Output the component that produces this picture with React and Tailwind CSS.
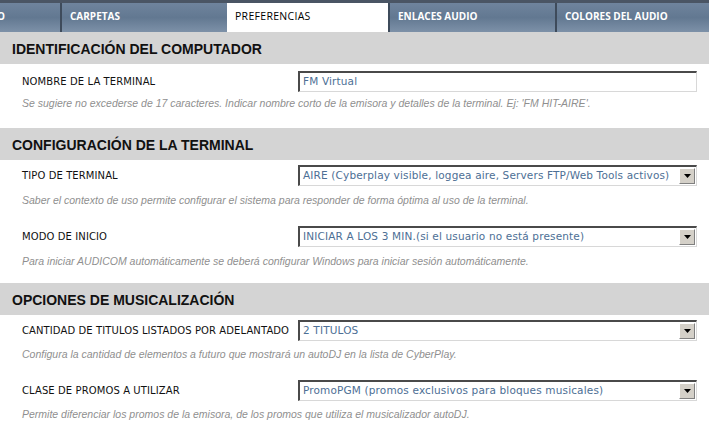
import React from "react";

const tabFont = { fontFamily: '"Open Sans", sans-serif' };
const dv = { fontFamily: '"DejaVu Sans", Verdana, sans-serif' };

function Tab({ label, active, className = "" }) {
  if (active) {
    return (
      <div className={"h-[29px] mt-[3px] pb-[2px] bg-white flex items-center pl-[8px] text-[10.5px] tracking-[0.3px] text-black " + className} style={tabFont}>
        {label}
      </div>
    );
  }
  return (
    <div className={"h-[29px] mt-[3px] pb-[2px] flex items-center pl-[8px] text-[10px] font-bold text-white bg-gradient-to-b from-[#6f849d] via-[#627891] to-[#7d91a8] border-l-2 border-[#3e4b5b] overflow-hidden whitespace-nowrap " + className} style={tabFont}>
      {label}
    </div>
  );
}

function Select({ value }) {
  return (
    <div className="flex-1 h-[21px] flex items-stretch border-t-2 border-l-2 border-[#4a4a4a] border-r border-b border-r-[#d8d8d8] border-b-[#d8d8d8] bg-white">
      <div className="flex-1 flex items-center pl-[3px] text-[10.5px] text-[#4d6f95] tracking-[0.15px] whitespace-nowrap overflow-hidden" style={dv}>
        {value}
      </div>
      <div className="w-[16px] my-[1px] mr-[1px] bg-[#d4d0c8] border border-t-white border-l-white border-r-[#808080] border-b-[#808080] flex items-center justify-center">
        <svg width="7" height="4" viewBox="0 0 7 4"><path d="M0 0h7L3.5 4z" fill="#000" /></svg>
      </div>
    </div>
  );
}

function Input({ value }) {
  return (
    <div className="flex-1 h-[21px] flex items-center pl-[3px] border-t-2 border-l-2 border-[#4a4a4a] border-r border-b border-r-[#d8d8d8] border-b-[#d8d8d8] bg-white text-[10.5px] text-[#4d6f95] tracking-[0.15px]" style={dv}>
      {value}
    </div>
  );
}

function Row({ label, control, help, helpMt = "mt-[7px]" }) {
  return (
    <div className="pl-[22px] pr-[12px]">
      <div className="flex items-center h-[21px]">
        <div className="w-[276px] text-[10px] tracking-[0.1px] text-[#111] whitespace-nowrap" style={dv}>{label}</div>
        {control}
      </div>
      <div className={helpMt + " text-[10.5px] leading-[14px] italic text-[#8f8f8f] h-[14px] whitespace-nowrap"} style={{ fontFamily: '"Liberation Sans", Arial, sans-serif' }}>{help}</div>
    </div>
  );
}

function Header({ title }) {
  return (
    <div className="h-[32px] bg-[#d4d4d4] flex items-center pl-[12px] pt-[2px] text-[14px] font-bold text-[#111]" style={{ fontFamily: '"Liberation Sans", Arial, sans-serif' }}>
      {title}
    </div>
  );
}

export default function App() {
  return (
    <div className="w-[709px] h-[424px] bg-white overflow-hidden">
      <div className="h-[32px] flex bg-[#4a5564]">
        <div className="w-[60px] h-[29px] mt-[3px] pb-[2px] flex items-center text-[10px] font-bold text-white bg-gradient-to-b from-[#6f849d] via-[#627891] to-[#7d91a8] overflow-hidden" style={tabFont}>
          <span className="ml-[-3px]">O</span>
        </div>
        <Tab label="CARPETAS" className="w-[167px]" />
        <Tab label="PREFERENCIAS" active className="w-[161px]" />
        <Tab label="ENLACES AUDIO" className="w-[167px]" />
        <Tab label="COLORES DEL AUDIO" className="flex-1" />
      </div>
      <Header title="IDENTIFICACIÓN DEL COMPUTADOR" />
      <div className="pt-[7px] pb-[18px]">
        <Row
          label="NOMBRE DE LA TERMINAL"
          helpMt="mt-[4px]"
          control={<Input value="FM Virtual" />}
          help="Se sugiere no excederse de 17 caracteres. Indicar nombre corto de la emisora y detalles de la terminal. Ej: 'FM HIT-AIRE'."
        />
      </div>
      <Header title="CONFIGURACIÓN DE LA TERMINAL" />
      <div className="pt-[5px] pb-[15px] flex flex-col gap-[19px]">
        <Row
          label="TIPO DE TERMINAL"
          control={<Select value="AIRE (Cyberplay visible, loggea aire, Servers FTP/Web Tools activos)" />}
          help="Saber el contexto de uso permite configurar el sistema para responder de forma óptima al uso de la terminal."
        />
        <Row
          label="MODO DE INICIO"
          control={<Select value="INICIAR A LOS 3 MIN.(si el usuario no está presente)" />}
          help="Para iniciar AUDICOM automáticamente se deberá configurar Windows para iniciar sesión automáticamente."
        />
      </div>
      <Header title="OPCIONES DE MUSICALIZACIÓN" />
      <div className="pt-[5px] flex flex-col gap-[19px]">
        <Row
          label="CANTIDAD DE TITULOS LISTADOS POR ADELANTADO"
          helpMt="mt-[6px]"
          control={<Select value="2 TITULOS" />}
          help="Configura la cantidad de elementos a futuro que mostrará un autoDJ en la lista de CyberPlay."
        />
        <Row
          label="CLASE DE PROMOS A UTILIZAR"
          helpMt="mt-[6px]"
          control={<Select value="PromoPGM (promos exclusivos para bloques musicales)" />}
          help="Permite diferenciar los promos de la emisora, de los promos que utiliza el musicalizador autoDJ."
        />
      </div>
    </div>
  );
}
